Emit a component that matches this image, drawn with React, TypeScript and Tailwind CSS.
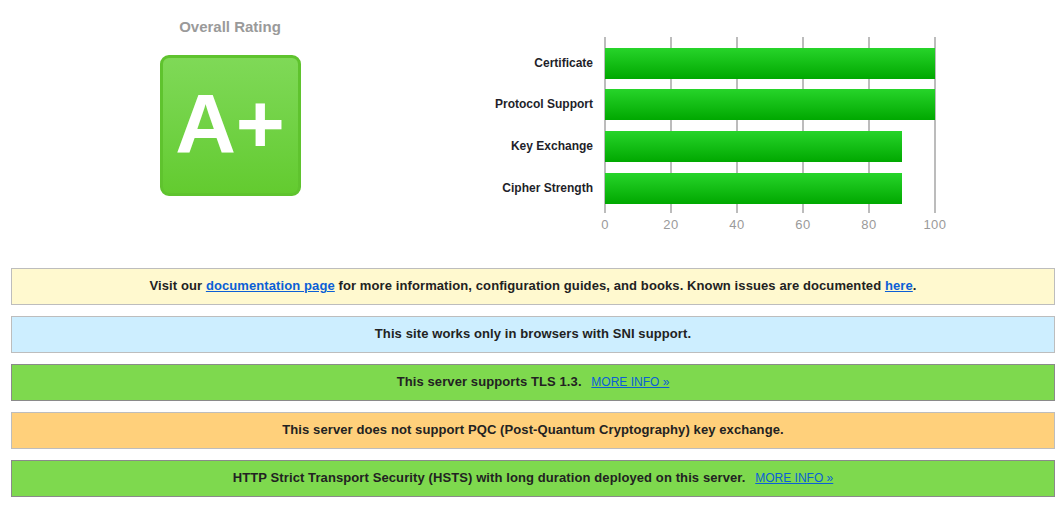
import React from "react";

const bars = [
  { label: "Certificate", value: 100, y: 48 },
  { label: "Protocol Support", value: 100, y: 89 },
  { label: "Key Exchange", value: 90, y: 131 },
  { label: "Cipher Strength", value: 90, y: 173 },
];

const ticks = [0, 20, 40, 60, 80, 100];

function RatingChart() {
  const x0 = 125;
  const unit = 3.3;
  return (
    <svg width="490" height="260" viewBox="0 0 490 260" className="block">
      <defs>
        <linearGradient id="barFill" x1="0" y1="0" x2="0" y2="1">
          <stop offset="0" stopColor="#27d42a" />
          <stop offset="1" stopColor="#00a800" />
        </linearGradient>
      </defs>
      {ticks.map((t) => (
        <rect key={t} x={x0 + t * unit - 1} y={37} width={2} height={176} fill="#bcbcbc" />
      ))}
      {bars.map((b) => (
        <g key={b.label}>
          <rect x={x0} y={b.y} width={b.value * unit} height={31} fill="url(#barFill)" />
          <text
            x={113}
            y={b.y + 18.5}
            textAnchor="end"
            fontFamily="'Liberation Sans', Arial, sans-serif"
            fontWeight="bold"
            fontSize="12"
            fill="#1f1f2a"
          >
            {b.label}
          </text>
        </g>
      ))}
      {ticks.map((t) => (
        <text
          key={`t${t}`}
          x={x0 + t * unit}
          y={229}
          textAnchor="middle"
          fontFamily="'Liberation Sans', Arial, sans-serif"
          fontSize="13"
          letterSpacing="0.5"
          fill="#9a9a9a"
        >
          {t}
        </text>
      ))}
    </svg>
  );
}

function Notice({
  bg,
  border,
  children,
}: {
  bg: string;
  border: string;
  children: React.ReactNode;
}) {
  return (
    <div
      className={`h-[37px] flex items-center justify-center border ${bg} ${border} text-[13px] font-bold tracking-[0.1px] text-[#222]`}
    >
      <div className="-mt-[1px]">{children}</div>
    </div>
  );
}

const linkCls = "text-[#0b5fd6] underline";
const moreCls = "ml-[6px] text-[12px] font-normal tracking-normal text-[#0b5fd6] underline";

export default function App() {
  return (
    <div
      className="w-[1064px] h-[508px] bg-white overflow-hidden"
      style={{ fontFamily: "'Liberation Sans', Arial, Helvetica, sans-serif" }}
    >
      <div className="flex h-[260px]">
        <div className="w-[460px] flex flex-col items-center pt-[18px]">
          <div className="text-[15px] leading-[17px] font-bold text-[#9a9a9a]">Overall Rating</div>
          <div className="mt-[20px] w-[141px] h-[141px] rounded-[9px] border-[3px] border-[#5fc32e] bg-gradient-to-b from-[#7fd957] to-[#63cb2f] flex items-center justify-center">
            <span className="text-white font-bold text-[84px] leading-none -mt-[3px]">A+</span>
          </div>
        </div>
        <div className="ml-[20px]">
          <RatingChart />
        </div>
      </div>
      <div className="mt-[8px] pl-[11px] pr-[9px] flex flex-col gap-[11px]">
        <Notice bg="bg-[#fff9cf]" border="border-[#bdbdbd]">
          Visit our <a className={linkCls}>documentation page</a> for more information, configuration
          guides, and books. Known issues are documented <a className={linkCls}>here</a>.
        </Notice>
        <Notice bg="bg-[#cdeeff]" border="border-[#bdbdbd]">
          This site works only in browsers with SNI support.
        </Notice>
        <Notice bg="bg-[#7ed94e]" border="border-[#8a8a8a]">
          This server supports TLS 1.3. <a className={moreCls}>MORE INFO »</a>
        </Notice>
        <Notice bg="bg-[#ffd07b]" border="border-[#bdbdbd]">
          This server does not support PQC (Post-Quantum Cryptography) key exchange.
        </Notice>
        <Notice bg="bg-[#7ed94e]" border="border-[#8a8a8a]">
          HTTP Strict Transport Security (HSTS) with long duration deployed on this server.{" "}
          <a className={moreCls}>MORE INFO »</a>
        </Notice>
      </div>
    </div>
  );
}
